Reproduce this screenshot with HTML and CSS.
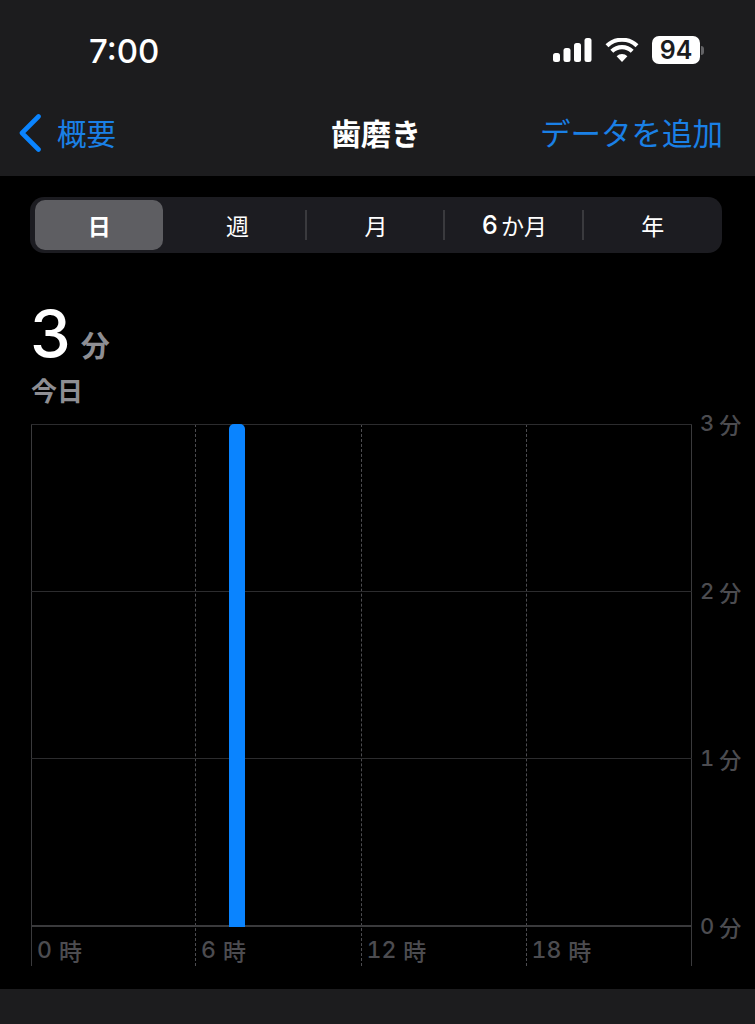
FILE: index.html
```html
<!DOCTYPE html>
<html lang="ja">
<head>
    <meta charset="UTF-8">
    <meta name="viewport" content="width=device-width, initial-scale=1.0">
    <title>歯磨き</title>
    <link rel="stylesheet" href="styles.css">
</head>
<body>
    <header class="top">
        <div class="status">
            <span class="time">7:00</span>
            <div class="status-icons">
                <svg class="signal" width="39" height="24" viewBox="0 0 39 24">
                    <rect x="0" y="15" width="7" height="9" rx="2.5" fill="#fff"/>
                    <rect x="10.5" y="10" width="7" height="14" rx="2.5" fill="#fff"/>
                    <rect x="21" y="5" width="7" height="19" rx="2.5" fill="#fff"/>
                    <rect x="31.5" y="0" width="7" height="24" rx="2.5" fill="#fff"/>
                </svg>
                <svg class="wifi" width="34" height="24" viewBox="0 0 34 24">
                    <path d="M17 24 L11.6 18.2 A7.8 7.8 0 0 1 22.4 18.2 Z" fill="#fff"/>
                    <path d="M6.8 13.2 A14.6 14.6 0 0 1 27.2 13.2" fill="none" stroke="#fff" stroke-width="4.2"/>
                    <path d="M2 7.8 A21.6 21.6 0 0 1 32 7.8" fill="none" stroke="#fff" stroke-width="4.2"/>
                </svg>
                <div class="battery">
                    <span class="battery-level">94</span>
                    <span class="battery-nub"></span>
                </div>
            </div>
        </div>
        <nav class="nav">
            <a class="back">
                <svg width="24" height="38" viewBox="0 0 24 38">
                    <path d="M20.5 2.5 L4 19 L20.5 35.5" fill="none" stroke="#0a84ff" stroke-width="4.6" stroke-linecap="round" stroke-linejoin="round"/>
                </svg>
                <span>概要</span>
            </a>
            <h1 class="title">歯磨き</h1>
            <a class="add">データを追加</a>
        </nav>
    </header>

    <main class="content">
        <div class="segments">
            <div class="seg active"><span>日</span></div>
            <div class="seg"><span>週</span></div>
            <div class="seg sep"><span>月</span></div>
            <div class="seg sep"><span><b class="num seg-num">6</b>か月</span></div>
            <div class="seg sep"><span>年</span></div>
        </div>

        <div class="summary">
            <div class="total"><span class="total-num">3</span><span class="total-unit">分</span></div>
            <div class="period">今日</div>
        </div>

        <div class="chart">
            <div class="plot">
                <div class="columns">
                    <div class="col"><span class="num">0</span><span>時</span></div>
                    <div class="col"><span class="num">6</span><span>時</span></div>
                    <div class="col"><span class="num">12</span><span>時</span></div>
                    <div class="col"><span class="num">18</span><span>時</span></div>
                </div>
                <div class="rows">
                    <div class="row"></div>
                    <div class="row"></div>
                    <div class="row"></div>
                </div>
                <div class="bar"></div>
            </div>
            <div class="y-labels">
                <div class="y-label"><span class="num">3</span><span>分</span></div>
                <div class="y-label"><span class="num">2</span><span>分</span></div>
                <div class="y-label"><span class="num">1</span><span>分</span></div>
                <div class="y-label"><span class="num">0</span><span>分</span></div>
            </div>
        </div>
    </main>

    <footer class="bottom"></footer>
</body>
</html>
```

FILE: styles.css
```css
body {
    margin: 0;
    width: 755px;
    height: 1024px;
    overflow: hidden;
    display: flex;
    flex-direction: column;
    background-color: #000;
    color: #fff;
    font-family: "Noto Sans CJK JP", Inter, sans-serif;
}

.num {
    font-family: Inter, "Noto Sans CJK JP", sans-serif;
    font-weight: inherit;
    font-variant-numeric: tabular-nums;
}

/* header */
.top {
    height: 176px;
    background-color: #1c1c1e;
}

.status {
    height: 100px;
    box-sizing: border-box;
    padding: 37px 51px 0 89px;
    display: flex;
    justify-content: space-between;
}

.time {
    font-family: Inter, sans-serif;
    font-size: 33px;
    font-weight: 500;
    line-height: 28px;
}

.status-icons {
    display: flex;
    align-items: flex-start;
    margin-top: 1px;
}

.signal {
    margin-right: 13px;
}

.wifi {
    margin-right: 13px;
}

.battery {
    display: flex;
    align-items: center;
    margin-top: -2px;
}

.battery-level {
    width: 48px;
    height: 28px;
    border-radius: 7px;
    background-color: #fff;
    color: #1c1c1e;
    font-family: Inter, sans-serif;
    font-size: 25px;
    font-weight: 600;
    line-height: 28px;
    text-align: center;
}

.battery-nub {
    width: 3px;
    height: 9px;
    margin-left: 1px;
    border-radius: 0 3px 3px 0;
    background-color: #636366;
}

.nav {
    height: 66px;
    padding: 0 32px 0 18px;
    display: grid;
    grid-template-columns: minmax(0, 1fr) auto minmax(0, 1fr);
    align-items: center;
    margin-top: -1px;
}

.back {
    display: flex;
    align-items: center;
    gap: 15px;
    color: #1a80e6;
    font-size: 29.5px;
}

.back svg {
    margin-top: 2px;
}

.title {
    margin: 0 0 0 11px;
    font-size: 30px;
    font-weight: 700;
}

.add {
    justify-self: end;
    white-space: nowrap;
    color: #1a80e6;
    font-size: 30.5px;
}

/* segmented control */
.content {
    flex: 1;
    padding: 21px 33px 0 30px;
}

.segments {
    display: flex;
    height: 56px;
    border-radius: 14px;
    background-color: #1c1c21;
}

.seg {
    flex: 1;
    box-sizing: border-box;
    padding: 3px 5px;
    position: relative;
    font-size: 23px;
}

.seg span {
    display: flex;
    align-items: center;
    justify-content: center;
    gap: 3px;
    height: 100%;
    border-radius: 10px;
}

.seg-num {
    font-size: 25px;
    font-weight: 500;
}

.seg.active span {
    background-color: #5e5e62;
    font-weight: 600;
}

.seg.sep::before {
    content: "";
    position: absolute;
    left: -2px;
    top: 13px;
    height: 30px;
    width: 2px;
    background-color: #3a3a3e;
}

/* summary */
.summary {
    margin-top: 38px;
}

.total {
    display: flex;
    align-items: baseline;
    height: 86px;
}

.total-num {
    font-family: Inter, sans-serif;
    font-size: 65px;
    font-weight: 500;
    line-height: 86px;
}

.total-unit {
    margin-left: 10px;
    color: #8e8e93;
    font-size: 29px;
    font-weight: 600;
}

.period {
    margin-top: -5px;
    padding-left: 1px;
    color: #8e8e93;
    font-size: 26px;
    font-weight: 600;
    line-height: 36px;
}

/* chart */
.chart {
    display: flex;
    margin: 16px 0 0 1px;
    color: #4c4c50;
    font-size: 23px;
    font-weight: 500;
}

.plot {
    position: relative;
    width: 661px;
    height: 542px;
}

.columns {
    display: grid;
    grid-template-columns: 164px 165.5px 165px 166.5px;
    height: 100%;
    box-sizing: border-box;
    border-right: 1px solid #3a3a3c;
}

.col {
    display: flex;
    align-items: flex-end;
    gap: 7px;
    padding: 0 0 1px 5px;
    border-left: 1px dashed #4c4c50;
    line-height: 30px;
}

.col:first-child {
    border-left: 1px solid #3a3a3c;
}

.rows {
    position: absolute;
    top: 0;
    left: 0;
    right: 0;
    height: 503px;
    box-sizing: border-box;
    display: grid;
    grid-template-rows: repeat(3, 1fr);
    border-bottom: 2px solid #3a3a3c;
}

.row {
    border-top: 1px solid #2c2c2e;
}

.bar {
    position: absolute;
    left: 198px;
    top: 0;
    width: 16px;
    height: 503px;
    border-radius: 5px 5px 0 0;
    background-color: #0a84ff;
}

.y-labels {
    display: flex;
    flex-direction: column;
    justify-content: space-between;
    height: 527px;
    margin: -13px 0 0 8px;
    font-size: 22px;
    line-height: 24px;
    white-space: nowrap;
}

.y-label {
    display: flex;
    gap: 5px;
}

.bottom {
    height: 35px;
    background-color: #1c1c1e;
}
```
